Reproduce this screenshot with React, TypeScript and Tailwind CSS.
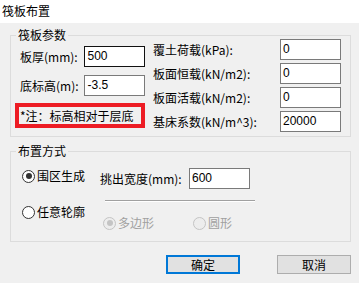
import type { ReactNode } from 'react';

function GroupBox({ title, className, children }: { title: string; className: string; children: ReactNode }) {
  return (
    <div className={`relative w-[341px] border border-[#dcdcdc] ${className}`}>
      <span className="absolute left-[5px] top-[-8px] bg-[#f0f0f0] px-[2px] leading-[14px]">{title}</span>
      {children}
    </div>
  );
}

function Field({ value, dark }: { value: string; dark?: boolean }) {
  return (
    <div
      className={`h-[21px] w-[61px] bg-white border ${dark ? 'border-[#111]' : 'border-[#7a7a7a]'} pl-[2px] font-['Liberation_Sans',sans-serif] text-[12px] leading-[19px]`}
    >
      {value}
    </div>
  );
}

function Radio({ label, checked, disabled }: { label: string; checked?: boolean; disabled?: boolean }) {
  return (
    <div className={`flex items-center gap-[2px] ${disabled ? 'text-[#a0a0a0]' : 'text-black'}`}>
      <span
        className={`flex h-[13px] w-[13px] items-center justify-center rounded-full border ${
          disabled ? 'border-[#c4c4c4] bg-[#ededed]' : 'border-[#333] bg-white'
        }`}
      >
        {checked && <span className={`h-[6px] w-[6px] rounded-full ${disabled ? 'bg-[#c4c4c4]' : 'bg-[#333]'}`} />}
      </span>
      <span className="leading-[14px]">{label}</span>
    </div>
  );
}

export default function App() {
  return (
    <div className="h-[283px] w-[359px] overflow-hidden bg-[#f0f0f0] font-['Noto_Sans_CJK_SC',sans-serif] text-[12px] leading-[14px] text-black">
      <div className="h-[23px] bg-white pl-[2px] pt-[4px] leading-[14px]">筏板布置</div>

      <div className="pl-[10px] pt-[12px]">
        <GroupBox title="筏板参数" className="h-[102px]">
          <div className="flex">
            <div className="ml-[4px] w-[130px] pt-[10px]">
              <div className="flex h-[21px] items-center pl-[5px]">
                <span className="w-[65px]">板厚(mm):</span>
                <Field value="500" dark />
              </div>
              <div className="mt-[8px] flex h-[21px] items-center pl-[5px]">
                <span className="w-[65px]">底标高(m):</span>
                <Field value="-3.5" />
              </div>
              <div className="mt-[7px] flex h-[25px] w-[130px] items-center border-[4px] border-[#ed1c24] pl-[1px] leading-[14px]">
                *注：标高相对于层底
              </div>
            </div>

            <div className="ml-[8px] flex flex-col gap-[3px] pt-[3px]">
              <div className="flex h-[21px] items-center">
                <span className="w-[127px]">覆土荷载(kPa):</span>
                <Field value="0" />
              </div>
              <div className="flex h-[21px] items-center">
                <span className="w-[127px]">板面恒载(kN/m2):</span>
                <Field value="0" />
              </div>
              <div className="flex h-[21px] items-center">
                <span className="w-[127px]">板面活载(kN/m2):</span>
                <Field value="0" />
              </div>
              <div className="flex h-[21px] items-center">
                <span className="w-[127px]">基床系数(kN/m^3):</span>
                <Field value="20000" />
              </div>
            </div>
          </div>
        </GroupBox>

        <div className="mt-[14px]">
          <GroupBox title="布置方式" className="h-[91px]">
            <div className="flex">
              <div className="ml-[11px] w-[78px] pt-[17px]">
                <Radio label="围区生成" checked />
                <div className="mt-[22px]">
                  <Radio label="任意轮廓" />
                </div>
              </div>

              <div className="pt-[16px]">
                <div className="flex h-[21px] items-center">
                  <span className="w-[89px]">挑出宽度(mm):</span>
                  <Field value="600" />
                </div>
                <div className="ml-[5px] mt-[11px] h-[2px] w-[150px] border-t border-[#a0a0a0] bg-white" />
                <div className="ml-[3px] mt-[14px] flex">
                  <div className="w-[90px]">
                    <Radio label="多边形" checked disabled />
                  </div>
                  <Radio label="圆形" disabled />
                </div>
              </div>
            </div>
          </GroupBox>
        </div>

        <div className="mt-[13px] flex w-[341px] justify-end gap-[37px]">
          <button className="h-[19px] w-[74px] border-2 border-[#0078d7] bg-[#e1e1e1] leading-[14px]">确定</button>
          <button className="h-[19px] w-[74px] border border-[#adadad] bg-[#e1e1e1] leading-[14px]">取消</button>
        </div>
      </div>
    </div>
  );
}
